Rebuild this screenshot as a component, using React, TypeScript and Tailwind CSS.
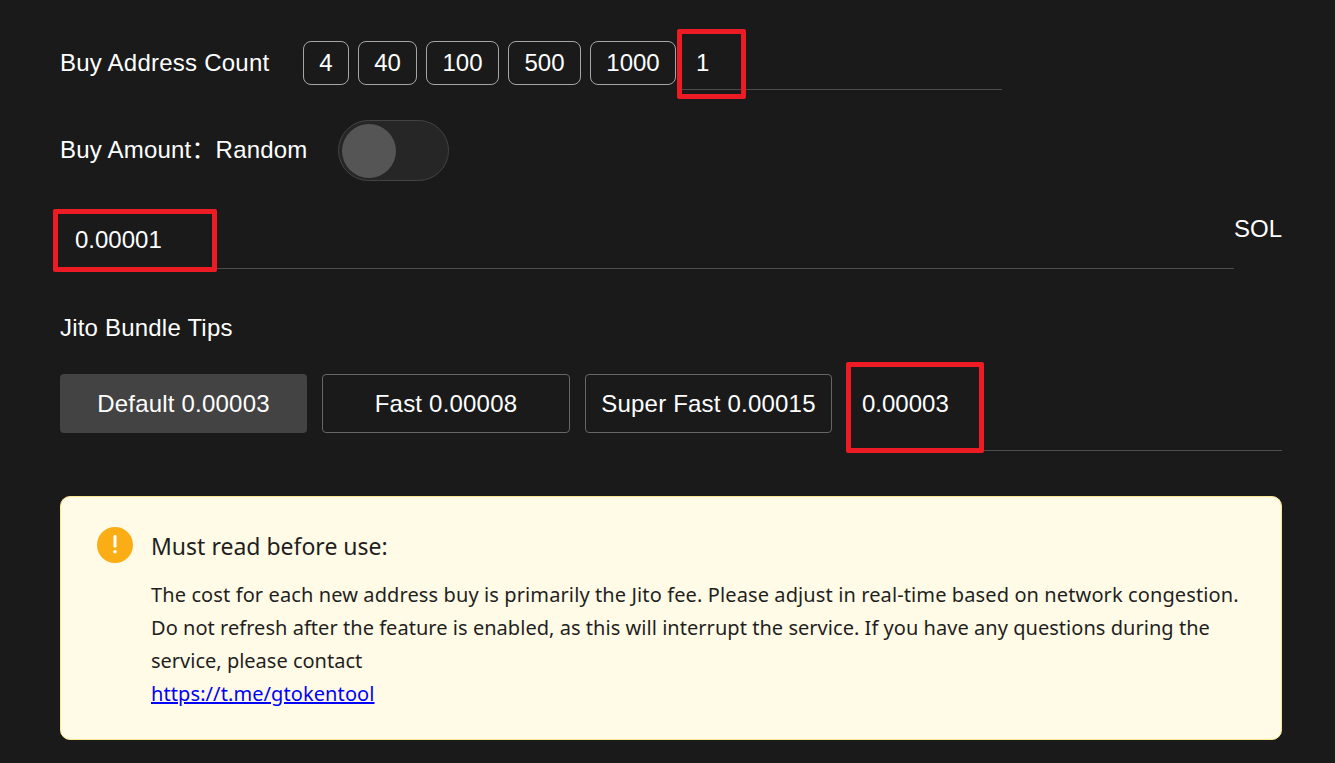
const amountButtons = [
  { n: '4', w: 'w-[46px]' },
  { n: '40', w: 'w-[59px]' },
  { n: '100', w: 'w-[73px]' },
  { n: '500', w: 'w-[73px]' },
  { n: '1000', w: 'w-[86px]' },
];

const tips = [
  { label: 'Default 0.00003', active: true, w: 'w-[247px]' },
  { label: 'Fast 0.00008', active: false, w: 'w-[248px]' },
  { label: 'Super Fast 0.00015', active: false, w: 'w-[247px]' },
];

function RedBox({ className }: { className: string }) {
  return <div className={`absolute border-[5px] border-[#ed1c24] rounded-[2px] pointer-events-none ${className}`} />;
}

export default function App() {
  return (
    <div className="min-h-[763px] bg-[#1a1a1a] pl-[60px] pr-[53px] pt-[41px] text-[24px] leading-[36px] text-white font-['Liberation_Sans','Noto_Sans_CJK_SC',sans-serif] overflow-hidden">
      <div className="flex items-start">
        <div className="w-[243px] h-[44px] leading-[44px] shrink-0 tracking-[0.23px]">Buy Address Count</div>
        <div className="flex gap-[9px] shrink-0">
          {amountButtons.map((b) => (
            <button
              key={b.n}
              className={`${b.w} h-[44px] border border-[#a6a6a6] rounded-[8px] leading-none`}
            >
              {b.n}
            </button>
          ))}
        </div>
        <div className="relative ml-[2px] w-[324px] h-[49px] border-b border-[#4d4d4d]">
          <input
            readOnly
            value="1"
            className="w-full h-[44px] pl-[18px] bg-transparent outline-none text-white"
          />
          <RedBox className="-left-[1px] -top-[12px] w-[69px] h-[70px]" />
        </div>
      </div>

      <div className="flex items-center mt-[30px]">
        <div className="w-[278px] shrink-0 tracking-[0.2px] leading-[34px] h-[36px]">Buy Amount：Random</div>
        <div className="w-[111px] h-[61px] rounded-full bg-[#262626] border border-[#434343] flex items-center pl-[3px]">
          <div className="w-[54px] h-[54px] rounded-full bg-[#555555]" />
        </div>
      </div>

      <div className="flex items-start mt-[30px]">
        <div className="relative flex-1 h-[58px] border-b border-[#4d4d4d]">
          <input
            readOnly
            value="0.00001"
            className="w-full h-[57px] pl-[15px] bg-transparent outline-none text-white"
          />
          <RedBox className="-left-[7px] -top-[2px] w-[164px] h-[63px]" />
        </div>
        <div className="w-[48px] shrink-0">SOL</div>
      </div>

      <div className="mt-[41px] tracking-[0.2px]">Jito Bundle Tips</div>

      <div className="flex items-start gap-[15px] mt-[28px]">
        {tips.map((t) => (
          <button
            key={t.label}
            className={`${t.w} h-[59px] rounded-[4px] shrink-0 whitespace-nowrap tracking-[0.2px] ${
              t.active ? 'bg-[#434343]' : 'border border-[#666666]'
            }`}
          >
            {t.label}
          </button>
        ))}
        <div className="relative flex-1 h-[77px] border-b border-[#4d4d4d]">
          <input
            readOnly
            value="0.00003"
            className="w-full h-[59px] pl-[15px] bg-transparent outline-none text-white"
          />
          <RedBox className="-left-[1px] -top-[12px] w-[138px] h-[91px]" />
        </div>
      </div>

      <div className="flex mt-[45px] h-[244px] pl-[36px] pr-[20px] bg-[#fffbe6] border border-[#ffe58f] rounded-[10px] text-[#1f1f1f] font-['Noto_Sans',sans-serif]">
        <svg viewBox="0 0 36 36" className="w-[36px] h-[36px] mt-[30px] shrink-0">
          <circle cx="18" cy="18" r="18" fill="#faad14" />
          <rect x="16.5" y="8" width="3" height="12.5" rx="1.2" fill="#fff" />
          <circle cx="18" cy="24.8" r="1.8" fill="#fff" />
        </svg>
        <div className="ml-[18px] pt-[31px]">
          <div className="text-[23px] leading-[36px]">Must read before use:</div>
          <div className="mt-[14px] text-[20px] leading-[33px] whitespace-nowrap">
            <span className="tracking-[0.11px]">
              The cost for each new address buy is primarily the Jito fee. Please adjust in real-time based on network congestion.
            </span>
            <br />
            <span className="tracking-[0.04px]">
              Do not refresh after the feature is enabled, as this will interrupt the service. If you have any questions during the
            </span>
            <br />
            service, please contact
            <br />
            <a href="#" className="text-[#0000ff] underline tracking-[0.09px]">https://t.me/gtokentool</a>
          </div>
        </div>
      </div>
    </div>
  );
}
